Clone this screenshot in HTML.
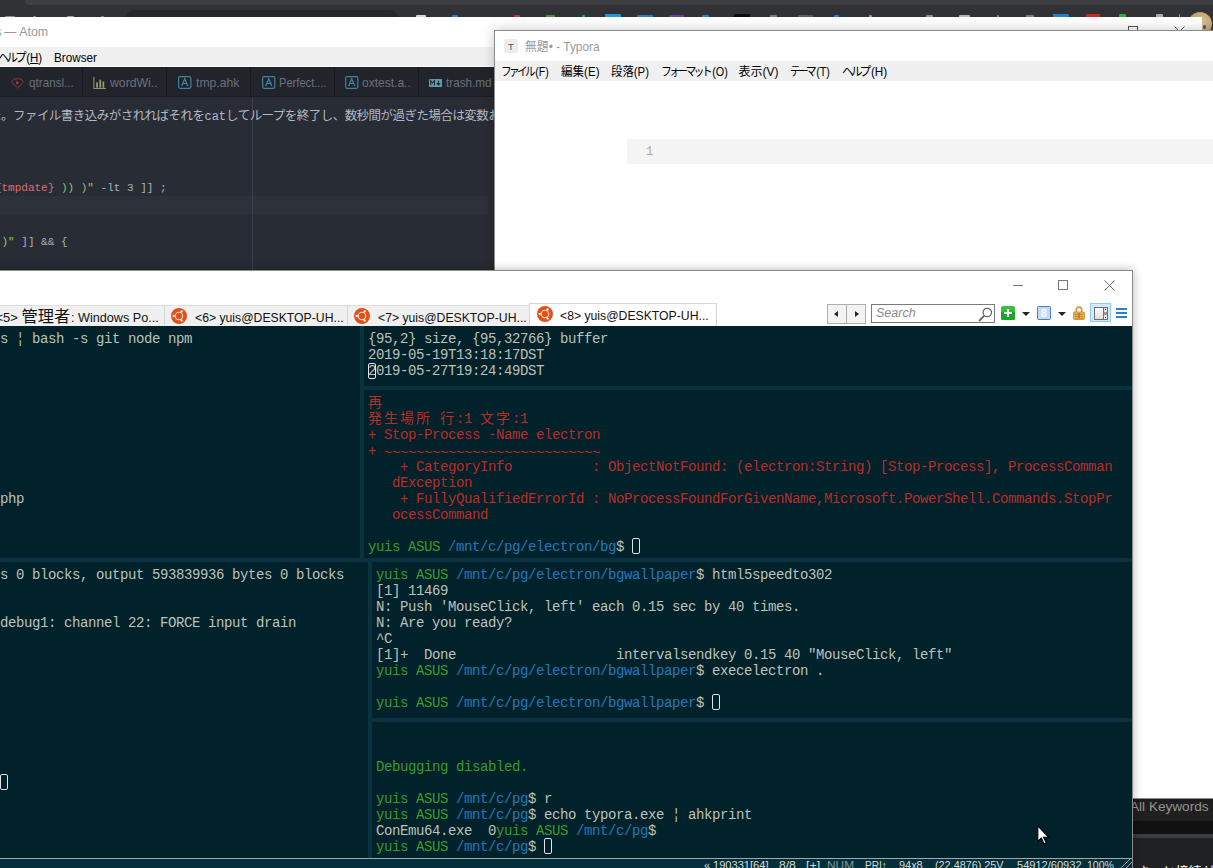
<!DOCTYPE html>
<html lang="ja">
<head>
<meta charset="utf-8">
<title>desktop</title>
<style>
*{box-sizing:border-box;margin:0;padding:0}
html,body{width:1213px;height:868px;overflow:hidden}
body{position:relative;background:#303235;font-family:"Liberation Sans","Noto Sans CJK JP",sans-serif;font-size:12px;color:#000}
.abs{position:absolute}
.t{position:absolute;white-space:pre;line-height:1;transform-origin:0 50%}
.kn{letter-spacing:-3px;margin-right:2.5px}
.fit{display:inline-block;transform-origin:0 50%;white-space:pre}

/* ---------- chrome (behind) ---------- */
#chrome{left:0;top:0;width:1213px;height:40px;background:#303235}
#chrome .tabshape{left:25px;top:0;width:1188px;height:5px;background:#3c4043;border-bottom-left-radius:6px}
.peeks i{position:absolute;display:block;border-radius:1px 1px 0 0}
#chrome .omni{left:126px;top:10px;width:272px;height:10px;background:#26282a;border-top-left-radius:8px;border-top-right-radius:8px}

/* ---------- atom ---------- */
#atom{left:0;top:17px;width:1202px;height:300px;background:#282c34;overflow:hidden}
#atom .title{left:0;top:0;width:100%;height:30px;background:#fff}
#atom .menu{left:0;top:30px;width:100%;height:20px;background:#f0f0f0;border-bottom:1px solid #fafafa}
#atom .tabs{left:0;top:50px;width:100%;height:30px;background:#21252b;border-bottom:1px solid #181a1f}
#atom .tab{position:absolute;top:0;height:29px;width:85px;border-left:1px solid #181a1f;color:#6a707c;font-size:13.5px}
#atom .tab .t{top:9.3px}
#atom .ed{left:0;top:80px;width:100%;height:220px;background:#282c34}
#atom .cur{left:0;top:98px;width:508px;height:18px;background:#2c313c}
#atom .guide{left:272px;top:80px;width:1px;height:200px;background:#3a3f4b}
.code{font-family:"Liberation Mono","Noto Sans CJK JP",monospace;font-size:11px;color:#abb2bf}
.jl{font-family:"Noto Sans CJK JP",sans-serif;font-size:12.5px;letter-spacing:-0.53px;color:#b2b9c6}
.jl .lm{font-family:"Liberation Mono",monospace;font-size:12px;letter-spacing:0}

/* ---------- typora ---------- */
#typora{left:494px;top:30px;width:740px;height:769px;background:#fff;border:1px solid #8c8c8c;box-shadow:0 0 12px rgba(0,0,0,.22)}
#typora .menu{left:0;top:30px;width:100%;height:20px;background:#f0f0f0}
#typora .mi{position:absolute;top:4px;font-size:12px;line-height:14px;white-space:pre;transform-origin:0 50%}
#typora .codeblk{left:132px;top:108px;width:620px;height:25px;background:#f4f4f4}

/* ---------- conemu ---------- */
#conemu{left:-10px;top:270px;width:1143px;height:610px;background:#fff;border:1px solid #8a8a8a;box-shadow:0 0 9px rgba(0,0,0,.3)}
#conemu .tabbar{left:0;top:34px;width:100%;height:21px;background:#fff}
.ctab{position:absolute;top:0;height:21px;background:#f0f0f0;border-top:1px solid #dedede;border-right:1px solid #d4d4d4;white-space:pre;overflow:hidden;color:#111}
.ctab.act{background:#fff;border:1px solid #d4d4d4;border-bottom:none;top:-2px;height:23px}
.nb{width:20px;height:20px;border:1px solid #adadad;background:#f3f3f3}
.nb i{position:absolute;top:6px;width:0;height:0;border-top:3.5px solid transparent;border-bottom:3.5px solid transparent}
.tri{width:0;height:0;border-left:4px solid transparent;border-right:4px solid transparent;border-top:4.5px solid #222}
#term{left:9px;top:55px;width:1132px;height:533px;background:#01222b;overflow:hidden}
.sep{position:absolute;background:#08333f}
pre.tl{position:absolute;margin-top:1px;font-family:"Liberation Mono","Noto Sans CJK JP",monospace;font-size:14px;letter-spacing:-0.4px;line-height:16px;color:#bcc1b9;white-space:pre}
pre.tl .g{color:#3f992c}pre.tl .b{color:#2678ba}pre.tl.r{color:#ba2c28}pre.tl .w{color:#bcc1b9}
.cj{letter-spacing:2px}
.cur{outline:1px solid #e4e4e4;outline-offset:-1px;border-radius:2px;position:relative;top:-1px}
#status{left:9px;top:587px;width:1132px;height:13px;background:#04303c;border-top:1px solid #a0a8a8;color:#d8dcd8;font-size:11px;overflow:hidden}

/* ---------- bottom right dark page ---------- */
#dark{left:1133px;top:799px;width:80px;height:69px;background:#202124}
</style>
</head>
<body>

<!-- chrome window behind everything -->
<div id="chrome" class="abs">
  <div class="abs tabshape"></div>
  <div class="abs omni"></div>
  <div class="peeks"><i style="left:5px;top:16px;width:10px;height:1px;background:#8d9093"></i><i style="left:33px;top:16px;width:3px;height:1px;background:#8d9093"></i><i style="left:67px;top:16px;width:7px;height:1px;background:#a0a3a6"></i><i style="left:101px;top:16px;width:3px;height:1px;background:#8d9093"></i><i style="left:416px;top:15px;width:10px;height:2px;background:#d8d8d8"></i><i style="left:452px;top:15px;width:6px;height:2px;background:#3a7bd0"></i><i style="left:514px;top:15px;width:6px;height:2px;background:#c43c2c"></i><i style="left:546px;top:15px;width:9px;height:2px;background:#5a8a50"></i><i style="left:582px;top:15px;width:3px;height:2px;background:#2fa84f"></i><i style="left:605px;top:14px;width:16px;height:3px;background:#1a9bdc"></i><i style="left:637px;top:15px;width:16px;height:2px;background:#2a7fc8"></i><i style="left:669px;top:15px;width:15px;height:2px;background:#6a3fa0"></i><i style="left:702px;top:15px;width:7px;height:2px;background:#2f7fd8"></i><i style="left:734px;top:14px;width:16px;height:3px;background:#0c0c0c"></i><i style="left:770px;top:15px;width:7px;height:2px;background:#7d8083"></i><i style="left:798px;top:15px;width:15px;height:2px;background:#5d6063"></i><i style="left:834px;top:15px;width:5px;height:2px;background:#2f7fd8"></i><i style="left:869px;top:15px;width:3px;height:2px;background:#d08a30"></i><i style="left:926px;top:15px;width:7px;height:2px;background:#8d9093"></i><i style="left:959px;top:15px;width:11px;height:2px;background:#b8b8a8"></i><i style="left:997px;top:15px;width:2px;height:2px;background:#8d9093"></i><i style="left:1026px;top:15px;width:8px;height:2px;background:#7d8083"></i><i style="left:1053px;top:14px;width:16px;height:3px;background:#1f7fd0"></i><i style="left:1086px;top:14px;width:14px;height:3px;background:#c8281e"></i><i style="left:1119px;top:14px;width:7px;height:3px;background:#28b030"></i><i style="left:1156px;top:14px;width:7px;height:3px;background:#aaaaaa"></i><i style="left:1179px;top:14px;width:1px;height:3px;background:#9a9a9a"></i></div>
  <div class="abs" style="left:1188px;top:12px;width:24px;height:24px;border-radius:50%;background:radial-gradient(circle at 60% 45%,#d9c29a 0,#c9a878 45%,#a8865a 100%)"><div class="abs" style="left:15px;top:13px;width:3px;height:4px;background:#3a4aa8;border-radius:50%"></div></div>
</div>

<!-- bottom-right dark page -->
<div id="dark" class="abs">
  <div class="abs" style="left:0;top:0;width:80px;height:22px;background:#202020"></div>
  <div class="t" style="left:-3px;top:-0.5px;font-size:13.6px;color:#989898;line-height:15px">All Keywords</div>
  <div class="abs" style="left:0;top:22px;width:80px;height:13px;background:#111"></div>
  <div class="abs" style="left:0;top:35px;width:80px;height:4px;background:#3a3d3f"></div>
  <div class="t" style="left:3.5px;top:66px;font-size:13px;color:#fff">さっと接続が切れ</div>
</div>

<!-- atom -->
<div id="atom" class="abs">
  <div class="abs title">
    <div class="t" style="left:-4.5px;top:9px;font-size:12px;color:#7aa8c8">s</div>
    <div class="t" id="atitle" style="transform:scaleX(1.0349);left:4px;top:9px;font-size:12px;color:#999">— Atom</div>
    <!-- window buttons (cut by typora) -->
    <div class="abs" style="left:1128px;top:9px;width:10px;height:10px;border:1px solid #555"></div>
    <svg class="abs" style="left:1174px;top:9px" width="11" height="11" viewBox="0 0 11 11"><path d="M0.5 0.5L10.5 10.5M10.5 0.5L0.5 10.5" stroke="#555" stroke-width="1" fill="none"/></svg>
  </div>
  <div class="abs menu">
    <div class="t" id="am1" style="transform:scaleX(0.9565);left:-2px;top:5px;font-size:12px"><span class="kn">ヘルプ</span>(<u>H</u>)</div>
    <div class="t" id="am2" style="transform:scaleX(0.9773);left:53.5px;top:5px;font-size:12px">Browser</div>
  </div>
  <div class="abs tabs">
    <div class="tab" style="left:-2px;border-left:none"><svg class="abs" style="left:12.5px;top:10.5px" width="13" height="11" viewBox="0 0 13 12" preserveAspectRatio="none"><path d="M3 1h7l2.5 3.5L6.5 11 .5 4.5z" fill="none" stroke="#a93b39" stroke-width=".85"/><path d="M5.2 3.2v4l3-2z" fill="#b83a38"/></svg><span class="t" id="at0" style="transform:scaleX(0.8654);left:30.5px">qtransl...</span></div>
    <div class="tab" style="left:82px"><svg class="abs" style="left:9.5px;top:9.5px" width="13.5" height="12.5" viewBox="0 0 15 14" preserveAspectRatio="none"><path d="M1 0v13h14" fill="none" stroke="#a3b077" stroke-width="1"/><rect x="3.5" y="6" width="2" height="6" fill="#8f9b69"/><rect x="7" y="3" width="2" height="9" fill="#8f9b69"/><rect x="10.5" y="5" width="2" height="7" fill="#8f9b69"/></svg><span class="t" id="at1" style="transform:scaleX(0.9057);left:27px">wordWi..</span></div>
    <div class="tab" style="left:166px"><svg class="abs aicon" style="left:11px;top:8.7px" width="13.5" height="13" viewBox="0 0 14 15" preserveAspectRatio="none"><rect x=".7" y=".7" width="12.6" height="13.6" rx="1.5" fill="none" stroke="#47839c" stroke-width="1.2"/><path d="M3.8 11.5L7 3.2l3.2 8.3M5 8.6h4" fill="none" stroke="#47839c" stroke-width="1.3"/></svg><span class="t" id="at2" style="transform:scaleX(0.9021);left:29px">tmp.ahk</span></div>
    <div class="tab" style="left:250px"><svg class="abs aicon" style="left:11px;top:8.7px" width="13.5" height="13" viewBox="0 0 14 15" preserveAspectRatio="none"><rect x=".7" y=".7" width="12.6" height="13.6" rx="1.5" fill="none" stroke="#47839c" stroke-width="1.2"/><path d="M3.8 11.5L7 3.2l3.2 8.3M5 8.6h4" fill="none" stroke="#47839c" stroke-width="1.3"/></svg><span class="t" id="at3" style="transform:scaleX(0.8241);left:27.5px">Perfect....</span></div>
    <div class="tab" style="left:334px"><svg class="abs aicon" style="left:10px;top:8.7px" width="13.5" height="13" viewBox="0 0 14 15" preserveAspectRatio="none"><rect x=".7" y=".7" width="12.6" height="13.6" rx="1.5" fill="none" stroke="#47839c" stroke-width="1.2"/><path d="M3.8 11.5L7 3.2l3.2 8.3M5 8.6h4" fill="none" stroke="#47839c" stroke-width="1.3"/></svg><span class="t" id="at4" style="transform:scaleX(0.8909);left:27px">oxtest.a..</span></div>
    <div class="tab" style="left:418px"><svg class="abs" style="left:9.5px;top:12px" width="13.5" height="8" viewBox="0 0 15 9" preserveAspectRatio="none"><rect width="15" height="9" rx="1" fill="#5a9bb3"/><path d="M2 7V2l2 2.5L6 2v5" fill="none" stroke="#21252b" stroke-width="1.2"/><path d="M10.5 2v4M8.6 4.6l1.9 2 1.9-2" fill="none" stroke="#21252b" stroke-width="1.2"/></svg><span class="t" id="at5" style="transform:scaleX(0.8679);left:27px">trash.md</span></div>
  </div>
  <div class="abs ed">
    <div class="abs" style="left:0;top:99px;width:488px;height:18px;background:#2c313a"></div>
    <div class="abs" style="left:252px;top:0;width:1px;height:220px;background:#3a3f4a"></div>
    <div class="t jl" id="jl" style="left:-11px;top:8.5px;height:18px;line-height:18px">た。ファイル書き込みがされればそれを<span class="lm">cat</span>してループを終了し、数秒間が過ぎた場合は変数おお</div>
    <div class="t code" style="left:-5.1px;top:82px;height:18px;line-height:18px"><span style="color:#e06c75">{tmpdate}</span> <span style="color:#98c379">)) )"</span> -lt 3 ]] ;</div>
    <div class="t code" style="left:1.5px;top:136px;height:18px;line-height:18px"><span style="color:#98c379">)"</span> ]] &amp;&amp; {</div>
  </div>
</div>

<!-- typora -->
<div id="typora" class="abs">
  <div class="abs" style="left:9px;top:8px;width:14px;height:14px;background:#ececec;border-radius:2px;transform:rotate(-4deg)"></div>
  <div class="t" style="left:13px;top:10.5px;font-size:9.5px;color:#555">T</div>
  <div class="t" id="ttitle" style="transform:scaleX(0.9868);left:29.5px;top:9.7px;font-size:12px;color:#999">無題• - Typora</div>
  <div class="abs menu">
    <div class="mi" id="tm1" style="transform:scaleX(0.8889);left:5.5px"><span class="kn">ファイル</span>(F)</div>
    <div class="mi" id="tm2" style="transform:scaleX(0.9625);left:65.5px">編集(E)</div>
    <div class="mi" id="tm3" style="transform:scaleX(0.9500);left:115.5px">段落(P)</div>
    <div class="mi" id="tm4" style="transform:scaleX(0.9054);left:165.5px"><span class="kn">フォーマット</span>(O)</div>
    <div class="mi" id="tm5" style="transform:scaleX(1.0000);left:243.5px">表示(V)</div>
    <div class="mi" id="tm6" style="transform:scaleX(0.8889);left:294.5px"><span class="kn">テーマ</span>(T)</div>
    <div class="mi" id="tm7" style="transform:scaleX(0.9783);left:346.5px"><span class="kn">ヘルプ</span>(H)</div>
  </div>
  <div class="abs codeblk"><div class="t" style="left:19px;top:6.6px;font-size:12px;color:#a8a8a8;font-family:'Liberation Mono',monospace">1</div></div>
</div>

<!-- conemu -->
<div id="conemu" class="abs">
  <!-- window buttons -->
  <div class="abs" style="left:1022px;top:14px;width:10px;height:1px;background:#777"></div>
  <div class="abs" style="left:1067px;top:9px;width:10px;height:10px;border:1px solid #777"></div>
  <svg class="abs" style="left:1113px;top:9px" width="11" height="11" viewBox="0 0 11 11"><path d="M0.5 0.5L10.5 10.5M10.5 0.5L0.5 10.5" stroke="#777" stroke-width="1" fill="none"/></svg>
  <div class="abs tabbar">
    <div class="ctab" style="left:0;width:174px"><span class="t" id="ct5a" style="left:4.5px;top:1px;font-size:13px;line-height:19px">&lt;5&gt; <span style="font-size:16.2px">管理者</span></span><span class="t" id="ct5b" style="transform:scaleX(0.9722);left:80px;top:2px;font-size:13px;line-height:19px">: Windows Po...</span></div>
    <div class="ctab" style="left:174px;width:183px"><svg class="abs ub" style="left:6px;top:2px" width="16" height="16" viewBox="0 0 16 16"><circle cx="8" cy="8" r="8" fill="#e2501a"/><circle cx="8" cy="8" r="3.7" fill="none" stroke="#fbe3d0" stroke-width="1.1"/><circle cx="2.7" cy="8" r="1.15" fill="#fff"/><circle cx="10.65" cy="3.4" r="1.15" fill="#fff"/><circle cx="10.65" cy="12.6" r="1.15" fill="#fff"/></svg><span class="t" id="ct6" style="transform:scaleX(0.9399);left:29.5px;top:4px;font-size:13px;line-height:15px">&lt;6&gt; yuis@DESKTOP-UH...</span></div>
    <div class="ctab" style="left:357px;width:182px"><svg class="abs ub" style="left:6px;top:2px" width="16" height="16" viewBox="0 0 16 16"><circle cx="8" cy="8" r="8" fill="#e2501a"/><circle cx="8" cy="8" r="3.7" fill="none" stroke="#fbe3d0" stroke-width="1.1"/><circle cx="2.7" cy="8" r="1.15" fill="#fff"/><circle cx="10.65" cy="3.4" r="1.15" fill="#fff"/><circle cx="10.65" cy="12.6" r="1.15" fill="#fff"/></svg><span class="t" id="ct7" style="transform:scaleX(0.9399);left:29.5px;top:4px;font-size:13px;line-height:15px">&lt;7&gt; yuis@DESKTOP-UH...</span></div>
    <div class="ctab act" style="left:538px;width:188px"><svg class="abs ub" style="left:7px;top:2px" width="16" height="16" viewBox="0 0 16 16"><circle cx="8" cy="8" r="8" fill="#e2501a"/><circle cx="8" cy="8" r="3.7" fill="none" stroke="#fbe3d0" stroke-width="1.1"/><circle cx="2.7" cy="8" r="1.15" fill="#fff"/><circle cx="10.65" cy="3.4" r="1.15" fill="#fff"/><circle cx="10.65" cy="12.6" r="1.15" fill="#fff"/></svg><span class="t" id="ct8" style="transform:scaleX(0.9399);left:30px;top:4px;font-size:13px;line-height:15px">&lt;8&gt; yuis@DESKTOP-UH...</span></div>
    <!-- toolbar -->
    <div class="abs nb" style="left:836px;top:-1px"><i style="border-right:4px solid #222;left:6px"></i></div>
    <div class="abs nb" style="left:855px;top:-1px"><i style="border-left:4px solid #222;left:8px"></i></div>
    <div class="abs" style="left:880px;top:-1px;width:124px;height:19px;border:1px solid #7a7a7a;background:#fff">
      <div class="t" style="left:4px;top:2px;font-size:12.5px;font-style:italic;color:#8a8a8a">Search</div>
      <svg class="abs" style="left:106px;top:2px" width="15" height="15" viewBox="0 0 15 15"><circle cx="9.3" cy="5.5" r="4.2" fill="none" stroke="#666" stroke-width="1.3"/><path d="M6.3 8.7L1 14" stroke="#666" stroke-width="1.8"/></svg>
    </div>
    <div class="abs" style="left:1010px;top:1px;width:14px;height:14px;border-radius:1.5px;background:linear-gradient(#3cc04a 0,#2fb83c 45%,#18a526 46%,#1aa828 100%)"><div class="abs" style="left:3px;top:6px;width:8px;height:2.4px;background:#f4fff4"></div><div class="abs" style="left:5.8px;top:3px;width:2.4px;height:8px;background:#f4fff4"></div></div>
    <div class="abs tri" style="left:1031px;top:7px"></div>
    <div class="abs" style="left:1046px;top:1px;width:14px;height:14px;border-radius:1.5px;background:#c4daf0;border:1px solid #4a7cc4"><div class="t" style="left:2.8px;top:0.5px;font-size:11px;font-weight:bold;color:#f6fafe">8</div></div>
    <div class="abs tri" style="left:1067px;top:7px"></div>
    <svg class="abs" style="left:1082px;top:1px" width="12" height="14" viewBox="0 0 12 14"><path d="M3.3 6.5V3.8a2.7 2.7 0 0 1 5.4 0V6.5" fill="none" stroke="#d8983c" stroke-width="1.7"/><rect x=".5" y="6" width="11" height="7.5" rx=".8" fill="#ecb860" stroke="#c8862a" stroke-width=".8"/><path d="M1.5 8.2h9M1.5 10.2h9M1.5 12.2h9" stroke="#b87a24" stroke-width=".8"/><rect x="5.2" y="7" width="1.6" height="5" fill="#b87a24"/></svg>
    <div class="abs" style="left:1099px;top:-2px;width:21px;height:19px;background:#d4eafc;border:1px solid #90c8f4"><div class="abs" style="left:3px;top:2.5px;width:14px;height:13px;border:1px solid #707070;background:linear-gradient(#fff,#ddd)"><div class="abs" style="right:0;top:0;width:4px;height:11px;background:#e8e8e8;border-left:1px solid #707070"><div class="abs" style="left:1px;top:1px;width:1px;height:1px;background:#222;box-shadow:0 8px 0 #222"></div><div class="abs" style="left:0;top:4px;width:3px;height:3px;background:#999"></div></div></div></div>
    <div class="abs" style="left:1125px;top:3px;width:11px;height:2px;background:#2c7fc8;box-shadow:0 4px 0 #2c7fc8,0 8px 0 #2c7fc8"></div>
  </div>
  <div id="term" class="abs">
    <div class="sep" style="left:360px;top:0;width:4px;height:232px"></div>
    <div class="sep" style="left:364px;top:60px;width:768px;height:4px"></div>
    <div class="sep" style="left:0;top:232px;width:1132px;height:4px"></div>
    <div class="sep" style="left:368px;top:236px;width:4px;height:297px"></div>
    <div class="sep" style="left:372px;top:392px;width:760px;height:4px"></div>
<pre class="tl" style="left:0;top:4px">s ¦ bash -s git node npm









php</pre>
<pre class="tl" style="left:0;top:240px">s 0 blocks, output 593839936 bytes 0 blocks


debug1: channel 22: FORCE input drain









<span class="cur"> </span></pre>
<pre class="tl" style="left:368px;top:4px">{95,2} size, {95,32766} buffer
2019-05-19T13:18:17DST
<span class="cur" style="top:0">2</span>019-05-27T19:24:49DST</pre>
<pre class="tl r" style="left:368px;top:68px"><span class="cj">再</span>
<span class="cj">発生場所</span> <span class="cj">行</span>:1 <span class="cj">文字</span>:1
+ Stop-Process -Name electron
+ <span style="position:relative;top:2px">~~~~~~~~~~~~~~~~~~~~~~~~~~~</span>
    + CategoryInfo          : ObjectNotFound: (electron:String) [Stop-Process], ProcessComman
   dException
    + FullyQualifiedErrorId : NoProcessFoundForGivenName,Microsoft.PowerShell.Commands.StopPr
   ocessCommand

<span class="g">yuis ASUS</span> <span class="b">/mnt/c/pg/electron/bg</span><span class="w">$ <span class="cur"> </span></span></pre>
<pre class="tl" style="left:376px;top:240px"><span class="g">yuis ASUS</span> <span class="b">/mnt/c/pg/electron/bgwallpaper</span>$ html5speedto302
[1] 11469
N: Push 'MouseClick, left' each 0.15 sec by 40 times.
N: Are you ready?
^C
[1]+  Done                    intervalsendkey 0.15 40 "MouseClick, left"
<span class="g">yuis ASUS</span> <span class="b">/mnt/c/pg/electron/bgwallpaper</span>$ execelectron .

<span class="g">yuis ASUS</span> <span class="b">/mnt/c/pg/electron/bgwallpaper</span>$ <span class="cur"> </span></pre>
<pre class="tl" style="left:376px;top:400px">


<span class="g">Debugging disabled.</span>

<span class="g">yuis ASUS</span> <span class="b">/mnt/c/pg</span>$ r
<span class="g">yuis ASUS</span> <span class="b">/mnt/c/pg</span>$ echo typora.exe ¦ ahkprint
ConEmu64.exe  0<span class="g">yuis ASUS</span> <span class="b">/mnt/c/pg</span>$
<span class="g">yuis ASUS</span> <span class="b">/mnt/c/pg</span>$ <span class="cur"> </span></pre>
  </div>
  <div id="status" class="abs"><svg class="abs" style="left:1119px;top:0" width="13" height="10" viewBox="0 0 13 10"><path d="M1 10L11 0M6 10L13 3" stroke="#9aa4a6" stroke-width="1" fill="none"/></svg><span class="t" id="s0" style="left:704.0px;top:1.2px;font-size:11px">«</span><span class="t" id="s1" style="transform:scaleX(1.0091);left:712.5px;top:1.2px;font-size:11px">190331[64]</span><span class="t" id="s2" style="transform:scaleX(1.1000);left:778.5px;top:1.2px;font-size:11px">8/8</span><span class="t" id="s3" style="transform:scaleX(1.1385);left:806.3px;top:1.2px;font-size:11px">[+]</span><span class="t" id="s4" style="transform:scaleX(1.0800);left:827.3px;top:1.2px;font-size:11px;color:#7f979d">NUM</span><span class="t" id="s5" style="transform:scaleX(0.9167);left:865.2px;top:1.2px;font-size:11px">PRI↕</span><span class="t" id="s6" style="transform:scaleX(0.9917);left:898.5px;top:1.2px;font-size:11px">94x8</span><span class="t" id="s7" style="transform:scaleX(0.9829);left:934.5px;top:1.2px;font-size:11px">(22,4876) 25V</span><span class="t" id="s8" style="transform:scaleX(1.0047);left:1016.7px;top:1.2px;font-size:11px">54912/60932</span><span class="t" id="s9" style="transform:scaleX(0.9571);left:1086.8px;top:1.2px;font-size:11px">100%</span></div>
</div>

<svg class="abs" style="left:1036.5px;top:824.5px" width="14" height="21" viewBox="0 0 14 21"><path d="M0.8 0.8V16.3l3.6-3.3 2.7 6.1 2.1-1L6.6 12.2h4.9z" fill="#fff" stroke="#000" stroke-width="1.1" stroke-linejoin="miter"/></svg>
</body>
</html>
